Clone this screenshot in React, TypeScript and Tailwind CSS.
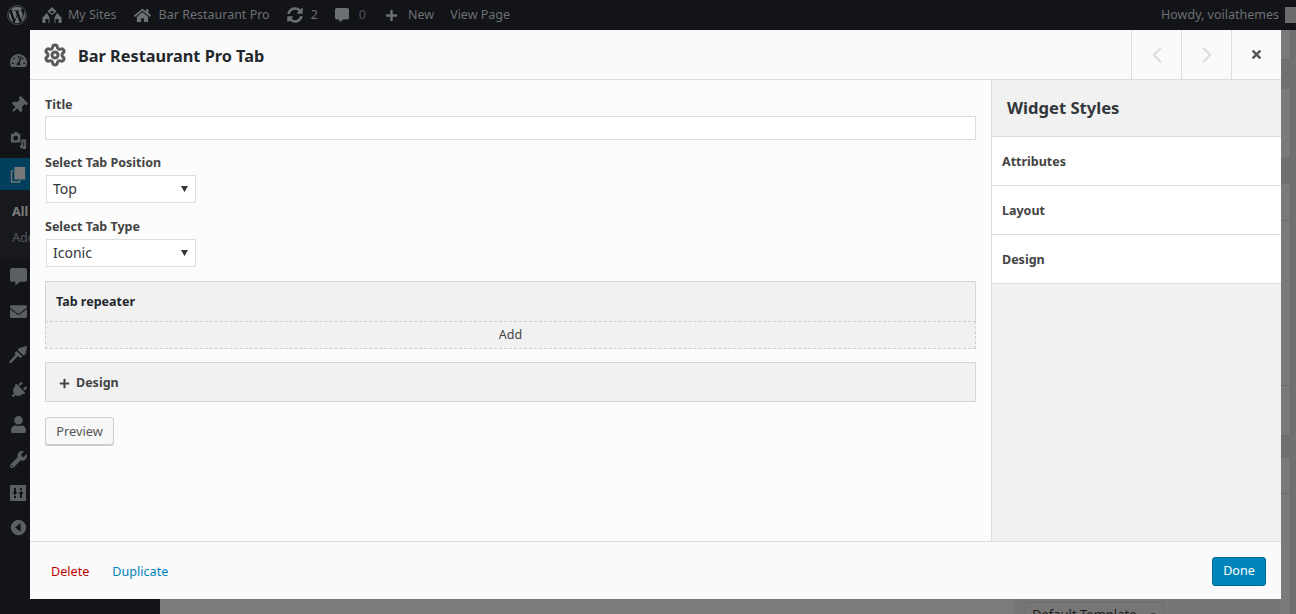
import {
  FaCommentAlt,
  FaEnvelope,
  FaHome,
  FaPlug,
  FaPlus,
  FaSyncAlt,
  FaTachometerAlt,
  FaThumbtack,
  FaTimes,
  FaUser,
  FaWordpress,
  FaWrench,
} from 'react-icons/fa';
import { ChevronLeft, ChevronRight, Settings } from 'lucide-react';

const FONT = { fontFamily: '"Noto Sans", "Open Sans", sans-serif' };

const SelectBox = ({ value }: { value: string }) => (
  <div className="ml-px flex h-[28px] w-[150px] items-center justify-between border border-[#dddddd] bg-white pb-[2px] pl-[6px] pr-[7px] text-[14px] text-[#32373c]">
    <span>{value}</span>
    <svg viewBox="0 0 7 6" className="mt-[1px] h-[6px] w-[7px] fill-[#333]">
      <polygon points="0,0 7,0 3.5,6" />
    </svg>
  </div>
);

const FieldLabel = ({ children }: { children: string }) => (
  <div className="text-[12.5px] leading-[16px] font-bold text-[#444]">{children}</div>
);

const StyleRow = ({ label }: { label: string }) => (
  <div className="flex h-[49px] items-center border-b border-[#dedede] bg-white pl-[10px] pt-[2px] text-[12.5px] font-bold text-[#444]">
    {label}
  </div>
);

const SideIcon = ({ children, className = '' }: { children: React.ReactNode; className?: string }) => (
  <div className={`flex h-[34px] w-[36px] items-center justify-center text-[17px] text-[#5c5f62] ${className}`}>
    {children}
  </div>
);

// hand drawn, the icon packages have nothing close to these
const SitesIcon = () => (
  <svg viewBox="0 0 20 20" className="ml-[15px] h-[20px] w-[20px] fill-current">
    <path d="M10 2 6 6v1l4 3 4-3V6zM8.5 6h3v2h-3zM5 8 .5 12.5V18h7v-5.5zM3.5 14h3v4h-3zM15 8l-2.5 4.5V18h7v-5.5zM13.5 14h3v4h-3z" fillRule="evenodd" />
  </svg>
);

const MediaIcon = () => (
  <svg viewBox="0 0 20 20" className="h-[19px] w-[19px] fill-current">
    <path fillRule="evenodd" d="M2 3h3l1-2h3l1 2h2v9H2zM7 5a2.5 2.5 0 1 0 .01 0z" />
    <path d="M13 9h5v8.5a1.8 1.8 0 1 1-2-1.8V11h-1v5.5a1.8 1.8 0 1 1-2-1.8z" />
  </svg>
);

const PagesIcon = () => (
  <svg viewBox="0 0 20 20" className="h-[18px] w-[18px] fill-current">
    <path fillRule="evenodd" d="M2 5h3v1.500H3.500V17H11v-1.500h1.500V18.500H2z" />
    <path d="M6 1h12v14H6z" />
  </svg>
);

const BrushIcon = () => (
  <svg viewBox="0 0 20 20" className="h-[20px] w-[20px] fill-current">
    <path d="M11 3 19 1l-1.500 8-2 1.500L9.500 5zM8.500 6 14.500 11.500 12.500 13 10 11 2.500 18.500 1 17 7.500 9.500 6.500 8z" />
  </svg>
);

const SlidersIcon = () => (
  <svg viewBox="0 0 16 16" className="h-[16px] w-[16px] fill-current">
    <path
      fillRule="evenodd"
      d="M0 0h16v16H0zM4 3v4H2.500L5 10.500 7.500 7H6V3zM4 11v2h2v-2zM10 3v2h2V3zM11 5.500 8.500 9H10v4h2V9h1.500z"
    />
  </svg>
);

const CollapseIcon = () => (
  <svg viewBox="0 0 20 20" className="h-[17px] w-[17px] fill-current">
    <path fillRule="evenodd" d="M10 1a9 9 0 1 1-.01 0zM12.500 5 6 10l6.500 5z" />
  </svg>
);

export default function App() {
  return (
    <div style={FONT} className="relative h-[614px] w-[1296px] overflow-hidden bg-[#7b7b7b]">
      {/* ADMIN BAR */}
      <header className="relative z-10 flex h-[30px] items-center justify-between bg-[#121418] pl-[7px] text-[12.5px] text-[#6d7073]">
        <div className="flex items-center">
          <FaWordpress className="text-[20px]" />
          <SitesIcon />
          <span className="ml-[6px]">My Sites</span>
          <FaHome className="ml-[17px] text-[17px]" />
          <span className="ml-[8px]">Bar Restaurant Pro</span>
          <FaSyncAlt className="ml-[17px] text-[16px]" />
          <span className="ml-[8px]">2</span>
          <FaCommentAlt className="ml-[17px] text-[14px]" />
          <span className="ml-[10px] text-[#4d5054]">0</span>
          <FaPlus className="ml-[19px] text-[13px]" />
          <span className="ml-[10px]">New</span>
          <span className="ml-[16px]">View Page</span>
        </div>
        <div className="flex items-center">
          <span>Howdy, voilathemes</span>
          <div className="ml-[6px] h-[16px] w-[11px] bg-[#6b6b6b]" />
        </div>
      </header>

      <div className="flex h-[584px]">
        {/* SIDEBAR */}
        <aside className="flex w-[160px] flex-col bg-[#121418] pt-[13px]">
          <SideIcon>
            <FaTachometerAlt />
          </SideIcon>
          <SideIcon className="mt-[11px]">
            <FaThumbtack className="rotate-45" />
          </SideIcon>
          <SideIcon className="mt-px">
            <MediaIcon />
          </SideIcon>
          <div className="mt-px flex h-[32px] bg-[#00405c]">
            <SideIcon className="h-[32px]">
              <span className="text-[#787878]">
                <PagesIcon />
              </span>
            </SideIcon>
          </div>
          <div className="h-[69px] bg-[#17191d] pl-[12px] pt-[9px] text-[12.5px] leading-[26px]">
            <div className="font-bold text-[#7c7c7c]">All</div>
            <div className="text-[#55585b]">Add</div>
          </div>
          <SideIcon>
            <FaCommentAlt />
          </SideIcon>
          <SideIcon className="mt-px">
            <FaEnvelope />
          </SideIcon>
          <SideIcon className="mt-[10px]">
            <BrushIcon />
          </SideIcon>
          <SideIcon className="mt-px">
            <FaPlug className="rotate-45" />
          </SideIcon>
          <SideIcon>
            <FaUser />
          </SideIcon>
          <SideIcon className="mt-px">
            <FaWrench />
          </SideIcon>
          <SideIcon>
            <SlidersIcon />
          </SideIcon>
          <SideIcon>
            <CollapseIcon />
          </SideIcon>
        </aside>
        <main className="flex-1 bg-[#7b7b7b]" />
      </div>

      {/* page leftovers peeking out under the modal */}
      <div className="absolute bottom-0 left-[1013px] right-0 h-[15px] bg-[#767676]" />
      <div className="absolute bottom-[-14px] left-[1025px] flex h-[26px] w-[139px] items-center justify-between border border-[#6c6c6c] px-[6px] text-[13px] text-[#1c1c1c]">
        <span>Default Template</span>
        <span className="text-[8px]">▼</span>
      </div>
      <div className="absolute right-0 top-[30px] bottom-0 w-[15px] bg-[#707070]" />
      <div className="absolute right-[5px] top-[30px] h-[30px] w-[10px] border-b border-r border-[#6a6a6a] bg-[#7a7a7a]" />
      <div className="absolute right-[5px] top-[89px] h-[70px] w-[10px] border-b border-r border-[#6a6a6a] bg-[#7a7a7a]" />
      <div className="absolute right-[5px] top-[184px] h-[252px] w-[10px] border-b border-r border-[#6a6a6a] bg-[#7a7a7a]" />
      <div className="absolute right-[5px] top-[220px] h-px w-[10px] bg-[#6e6e6e]" />
      <div className="absolute right-[5px] top-[385px] h-px w-[10px] bg-[#6a6a6a]" />
      <div className="absolute right-[5px] top-[458px] bottom-0 w-[10px] border-r border-[#6a6a6a] bg-[#7a7a7a]" />
      <div className="absolute right-[5px] top-[493px] h-px w-[10px] bg-[#6a6a6a]" />

      {/* MODAL */}
      <section className="absolute left-[30px] top-[30px] flex h-[569px] w-[1251px] flex-col bg-[#fcfcfc]">
        <div className="flex h-[50px] shrink-0 items-center border-b border-[#dddddd] bg-[#fafafa]">
          <Settings size={24} strokeWidth={3} className="ml-[13px] text-[#5a5a5a]" />
          <h1 className="ml-[11px] flex-1 pt-[3px] text-[16.3px] font-bold text-[#23282d]">Bar Restaurant Pro Tab</h1>
          <div className="flex h-full w-[50px] items-center justify-center border-l border-[#dddddd] text-[#dddddd]">
            <ChevronLeft size={26} strokeWidth={2} />
          </div>
          <div className="flex h-full w-[50px] items-center justify-center border-l border-[#dddddd] text-[#dddddd]">
            <ChevronRight size={26} strokeWidth={2} />
          </div>
          <div className="flex h-full w-[50px] items-center justify-center border-l border-[#dddddd] text-[13px] text-[#555]">
            <FaTimes />
          </div>
        </div>

        <div className="flex min-h-0 flex-1">
          {/* FORM */}
          <div className="flex-1 px-[15px] pt-[17px]">
            <FieldLabel>Title</FieldLabel>
            <div className="mt-[3px] h-[24px] border border-[#dddddd] bg-white" />
            <div className="mt-[15px]">
              <FieldLabel>Select Tab Position</FieldLabel>
            </div>
            <div className="mt-[4px]">
              <SelectBox value="Top" />
            </div>
            <div className="mt-[16px]">
              <FieldLabel>Select Tab Type</FieldLabel>
            </div>
            <div className="mt-[4px]">
              <SelectBox value="Iconic" />
            </div>
            <div className="mt-[14px] flex h-[40px] items-center border border-b-0 border-[#d5d5d5] bg-[#f1f1f1] pl-[10px] pt-[2px] text-[12.5px] font-bold text-[#23282d]">
              Tab repeater
            </div>
            <div className="flex h-[28px] items-center justify-center border border-dashed border-[#cfcfcf] bg-[#f1f1f1] text-[12.5px] text-[#444]">
              Add
            </div>
            <div className="mt-[13px] flex h-[40px] items-center border border-[#d5d5d5] bg-[#f1f1f1] pl-[13px] pt-[2px] text-[12.5px] font-bold text-[#444]">
              <FaPlus className="text-[11px]" />
              <span className="ml-[6px]">Design</span>
            </div>
            <div className="mt-[15px] flex h-[28px] w-[69px] items-center justify-center rounded-[3px] border border-[#cccccc] bg-[#f7f7f7] pt-[2px] text-[12.8px] text-[#555] shadow-[0_1px_0_#cccccc]">
              Preview
            </div>
          </div>

          {/* WIDGET STYLES */}
          <aside className="flex w-[290px] shrink-0 flex-col border-l border-[#dddddd] bg-[#f1f1f1]">
            <div className="flex h-[57px] shrink-0 items-center border-b border-[#dedede] pl-[15px] text-[16.6px] font-bold text-[#32373c]">
              Widget Styles
            </div>
            <StyleRow label="Attributes" />
            <StyleRow label="Layout" />
            <StyleRow label="Design" />
          </aside>
        </div>

        <div className="flex h-[58px] shrink-0 items-center justify-between border-t border-[#dddddd] bg-[#fafafa] pl-[21px] pr-[15px] pt-[2px] text-[12.6px]">
          <div className="flex items-center pt-[1px]">
            <span className="text-[#bf0000]">Delete</span>
            <span className="ml-[23px] text-[#0085ba]">Duplicate</span>
          </div>
          <div className="flex h-[29px] w-[54px] items-center justify-center rounded-[3px] border border-[#006799] bg-[#0085ba] text-white">
            Done
          </div>
        </div>
      </section>
    </div>
  );
}
